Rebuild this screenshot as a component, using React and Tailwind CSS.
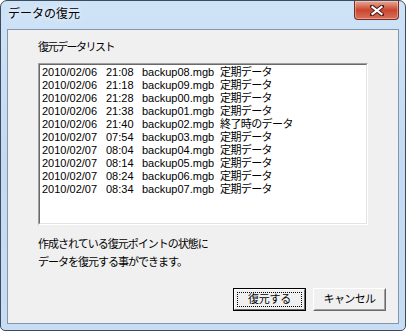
import React from "react";

const rows = [
  ["2010/02/06", "21:08", "backup08.mgb", "定期データ"],
  ["2010/02/06", "21:18", "backup09.mgb", "定期データ"],
  ["2010/02/06", "21:28", "backup00.mgb", "定期データ"],
  ["2010/02/06", "21:38", "backup01.mgb", "定期データ"],
  ["2010/02/06", "21:40", "backup02.mgb", "終了時のデータ"],
  ["2010/02/07", "07:54", "backup03.mgb", "定期データ"],
  ["2010/02/07", "08:04", "backup04.mgb", "定期データ"],
  ["2010/02/07", "08:14", "backup05.mgb", "定期データ"],
  ["2010/02/07", "08:24", "backup06.mgb", "定期データ"],
  ["2010/02/07", "08:34", "backup07.mgb", "定期データ"],
];

const ui = { fontFamily: '"Liberation Sans", "Noto Sans CJK JP", sans-serif' };

function CloseButton() {
  return (
    <div className="w-[45px] h-[19px] rounded-b-[4px] border border-t-0 border-[#7a2a1e] bg-gradient-to-b from-[#e9a796] via-[#c9452f] to-[#d9705a] flex items-center justify-center shadow-[inset_0_0_0_1px_rgba(255,255,255,0.35)]">
      <svg width="14" height="11" viewBox="0 0 14 11">
        <path d="M2 1.5 L12 9.5 M12 1.5 L2 9.5" stroke="#4a1a14" strokeWidth="4" strokeLinecap="square" />
        <path d="M2.5 2 L11.5 9 M11.5 2 L2.5 9" stroke="#ffffff" strokeWidth="2.2" strokeLinecap="square" />
      </svg>
    </div>
  );
}

function Button({ children, isDefault }) {
  if (isDefault) {
    return (
      <div className="w-[73px] h-[23px] border border-[#000] bg-[#f0f0f0]">
        <div className="h-full border border-t-white border-l-white border-b-[#696969] border-r-[#696969] p-[2px]">
          <div className="h-full border border-dotted border-[#000] flex items-center justify-center text-[11px] tracking-[-0.3px] text-black">
            {children}
          </div>
        </div>
      </div>
    );
  }
  return (
    <div className="w-[73px] h-[23px] border border-t-white border-l-white border-b-[#696969] border-r-[#696969] bg-[#f0f0f0]">
      <div className="h-full border border-t-[#f0f0f0] border-l-[#f0f0f0] border-b-[#a0a0a0] border-r-[#a0a0a0] flex items-center justify-center text-[11px] tracking-[-0.6px] text-black">
        {children}
      </div>
    </div>
  );
}

export default function App() {
  return (
    <div className="w-[406px] h-[331px] bg-white" style={ui}>
      <div className="w-full h-full rounded-t-[7px] rounded-b-[5px] border border-[#3d4b5c] bg-gradient-to-b from-[#cfe3f7] via-[#c3daf2] to-[#c7ddf4] flex flex-col px-[6px] pb-[6px]">
        <div className="h-[28px] flex items-start justify-between">
          <div className="pl-[1px] pt-[5px] text-[12px] leading-[16px] text-black [text-shadow:0_0_6px_#fff]">
            データの復元
          </div>
          <CloseButton />
        </div>
        <div className="flex-1 border border-[#8496ab] bg-[#f0f0f0] px-[30px] pt-[11px] flex flex-col">
          <div className="text-[11px] leading-[13px] tracking-[-1.5px] text-black">復元データリスト</div>
          <div className="mt-[9px] h-[162px] border border-t-[#a0a0a0] border-l-[#a0a0a0] border-b-white border-r-white">
            <div className="h-full border border-t-[#696969] border-l-[#696969] border-b-[#e3e3e3] border-r-[#e3e3e3] bg-white pl-[2px] pt-[1px]">
              {rows.map((r, i) => (
                <div key={i} className="flex h-[13px] items-center text-[11px] leading-[13px] text-black whitespace-nowrap">
                  <span className="w-[64px]">{r[0]}</span>
                  <span className="w-[36px]">{r[1]}</span>
                  <span className="w-[78px]">{r[2]}</span>
                  <span className="tracking-[-0.6px]">{r[3]}</span>
                </div>
              ))}
            </div>
          </div>
          <div className="mt-[10px] text-[11px] leading-[18px] tracking-[-1px] text-black">
            <div>作成されている復元ポイントの状態に</div>
            <div>データを復元する事ができます。</div>
          </div>
          <div className="mt-[17px] flex justify-end gap-[7px] -mr-[18px]">
            <Button isDefault>復元する</Button>
            <Button>キャンセル</Button>
          </div>
        </div>
      </div>
    </div>
  );
}
